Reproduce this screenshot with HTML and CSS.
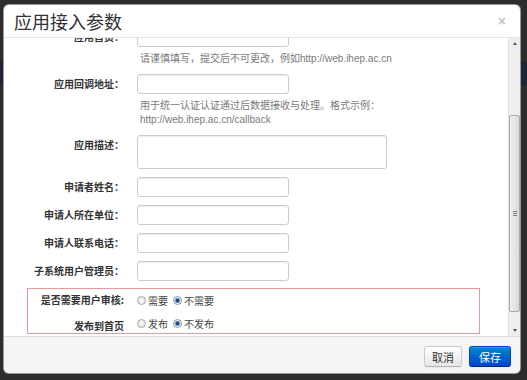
FILE: index.html
```html
<!DOCTYPE html>
<html lang="zh-CN">
<head>
  <meta charset="UTF-8" />
  <title>应用接入参数</title>
  <link rel="stylesheet" href="styles.css">
</head>
<body>

<div class="modal">
  <div class="modal-header">
    <h3>应用接入参数</h3>
    <button class="close" type="button">×</button>
  </div>

  <div class="body-wrap">
    <div class="modal-body" id="modalBody">
      <form class="form-horizontal">
        <div class="control-group">
          <label class="control-label">应用首页：</label>
          <div class="controls">
            <input type="text">
            <p class="help">请谨慎填写，提交后不可更改，例如http://web.ihep.ac.cn</p>
          </div>
        </div>
        <div class="control-group">
          <label class="control-label">应用回调地址：</label>
          <div class="controls">
            <input type="text">
            <p class="help">用于统一认证认证通过后数据接收与处理。格式示例：<br>http://web.ihep.ac.cn/callback</p>
          </div>
        </div>
        <div class="control-group">
          <label class="control-label">应用描述：</label>
          <div class="controls"><textarea></textarea></div>
        </div>
        <div class="control-group">
          <label class="control-label">申请者姓名：</label>
          <div class="controls"><input type="text"></div>
        </div>
        <div class="control-group">
          <label class="control-label">申请人所在单位：</label>
          <div class="controls"><input type="text"></div>
        </div>
        <div class="control-group">
          <label class="control-label">申请人联系电话：</label>
          <div class="controls"><input type="text"></div>
        </div>
        <div class="control-group">
          <label class="control-label">子系统用户管理员：</label>
          <div class="controls"><input type="text"></div>
        </div>

        <div class="audit-box">
          <div class="radio-group">
            <label class="control-label">是否需要用户审核:</label>
            <div class="radios">
              <label><input type="radio" name="audit">需要</label>
              <label><input type="radio" name="audit" checked>不需要</label>
            </div>
          </div>
          <div class="radio-group">
            <label class="control-label low">发布到首页</label>
            <div class="radios">
              <label><input type="radio" name="publish">发布</label>
              <label><input type="radio" name="publish" checked>不发布</label>
            </div>
          </div>
        </div>
      </form>
    </div>

    <div class="scrollbar">
      <span class="sb-btn up"></span>
      <div class="sb-track"><div class="sb-thumb"></div></div>
      <span class="sb-btn down"></span>
    </div>
  </div>

  <div class="modal-footer">
    <button class="btn" type="button">取消</button>
    <button class="btn btn-primary" type="button">保存</button>
  </div>
</div>

<script>
  // the dialog is shown scrolled down a little
  document.getElementById("modalBody").scrollTop = 25;
</script>

</body>
</html>
```

FILE: styles.css
```css
body {
  margin: 0;
  background: #2d2d2d linear-gradient(to bottom, #2d2d2d 62px, #1d2535 62px, #1d2535 86px, #2d2d2d 86px);
  font-family: "Liberation Sans", "Noto Sans CJK SC", sans-serif;
  font-size: 10px;
  color: #333;
}

.modal {
  box-sizing: border-box;
  width: 518px;
  height: 370px;
  margin: 4px 0 0 3px;
  background: #fff;
  border: 1px solid rgba(0,0,0,0.4);
  border-radius: 6px;
  display: flex;
  flex-direction: column;
  overflow: hidden;
}

.modal-header {
  height: 32px;
  flex-shrink: 0;
  display: flex;
  align-items: center;
  justify-content: space-between;
  padding: 0 14px 0 10px;
  border-bottom: 1px solid #e5e5e5;
}

.modal-header h3 {
  margin: 0;
  font-family: "Noto Sans CJK SC", sans-serif;
  font-size: 18px;
  font-weight: normal;
  color: #333;
  line-height: 22px;
}

.close {
  border: none;
  background: none;
  padding: 0;
  font-family: "Liberation Sans", sans-serif;
  font-size: 14px;
  font-weight: bold;
  color: #c8c8c8;
  line-height: 14px;
}

.body-wrap {
  height: 298px;
  flex-shrink: 0;
  display: flex;
}

.modal-body {
  flex: 1;
  overflow: hidden;
}

/* drawn scrollbar, the old windows look */
.scrollbar {
  width: 11px;
  display: flex;
  flex-direction: column;
  background: #efefef;
  border-left: 1px solid #e2e2e2;
}

.sb-btn {
  height: 11px;
  display: flex;
  align-items: center;
  justify-content: center;
}

.sb-btn::after {
  content: "";
  border-left: 2.5px solid transparent;
  border-right: 2.5px solid transparent;
}

.sb-btn.up::after { border-bottom: 3px solid #555; }
.sb-btn.down::after { border-top: 3px solid #555; }

.sb-track {
  flex: 1;
}

.sb-thumb {
  box-sizing: border-box;
  margin: 66px 0 0 0;
  height: 197px;
  border: 1px solid #a9a9a9;
  border-radius: 2px;
  background:
    repeating-linear-gradient(#7d7d7d 0 1px, transparent 1px 2px) center / 4px 5px no-repeat,
    linear-gradient(to right, #f1f1f1, #d9d9d9);
}

.form-horizontal {
  padding: 14px 0 20px 21px;
}

.control-group {
  display: grid;
  grid-template-columns: 99px 1fr;
  column-gap: 13px;
  margin-bottom: 8px;
}

.control-label {
  text-align: right;
  font-weight: bold;
  line-height: 20px;
  font-family: "Noto Sans CJK SC", sans-serif;
  white-space: nowrap;
  color: #333;
}

.controls input[type="text"],
.controls textarea {
  display: block;
  box-sizing: border-box;
  width: 152px;
  height: 20px;
  margin: 0;
  padding: 2px 4px;
  border: 1px solid #ccc;
  border-radius: 3px;
  box-shadow: inset 0 1px 1px rgba(0,0,0,0.075);
  font: inherit;
}

.controls textarea {
  width: 250px;
  height: 34px;
  resize: none;
}

.help {
  margin: 5px 0 0 3px;
  line-height: 14px;
  color: #7a7a7a;
}

.audit-box {
  width: 453px;
  box-sizing: border-box;
  margin: -1px 0 0 2px;
  border: 1px solid #e79a9f;
}

.radio-group {
  display: grid;
  grid-template-columns: 96px 1fr;
  column-gap: 13px;
  height: 22px;
  align-items: center;
}

.radio-group .control-label.low {
  padding-top: 5px;
}

.radios {
  display: flex;
  gap: 5px;
  color: #444;
}

.radios label {
  display: flex;
  align-items: center;
  font-family: "Noto Sans CJK SC", sans-serif;
}

.radios input {
  appearance: none;
  width: 9px;
  height: 9px;
  margin: 0 2px 0 0;
  border: 1px solid #a7a7a7;
  border-radius: 50%;
  background: radial-gradient(circle, #fbfbfb, #dedede);
}

.radios input:checked {
  background: radial-gradient(circle, #2b4a7a 0 1.6px, #7f9fc7 2.2px, #e8eef5 3px);
  border-color: #8a9bb3;
}

.modal-footer {
  flex: 1;
  display: flex;
  justify-content: flex-end;
  align-items: flex-start;
  gap: 7px;
  padding: 9px 9px 0 0;
  background: #f5f5f5;
  border-top: 1px solid #ddd;
}

.btn {
  height: 21px;
  padding: 0 7px;
  font-family: "Noto Sans CJK SC", sans-serif;
  font-size: 11px;
  color: #333;
  background: linear-gradient(#fff, #e6e6e6);
  border: 1px solid #ccc;
  border-bottom-color: #b3b3b3;
  border-radius: 3px;
  box-shadow: inset 0 1px 0 rgba(255,255,255,0.2), 0 1px 2px rgba(0,0,0,0.05);
}

.btn-primary {
  padding: 0 9px;
  color: #fff;
  background: linear-gradient(#0088cc, #0044cc);
  border-color: #0044cc #0044cc #002a80;
}
```
